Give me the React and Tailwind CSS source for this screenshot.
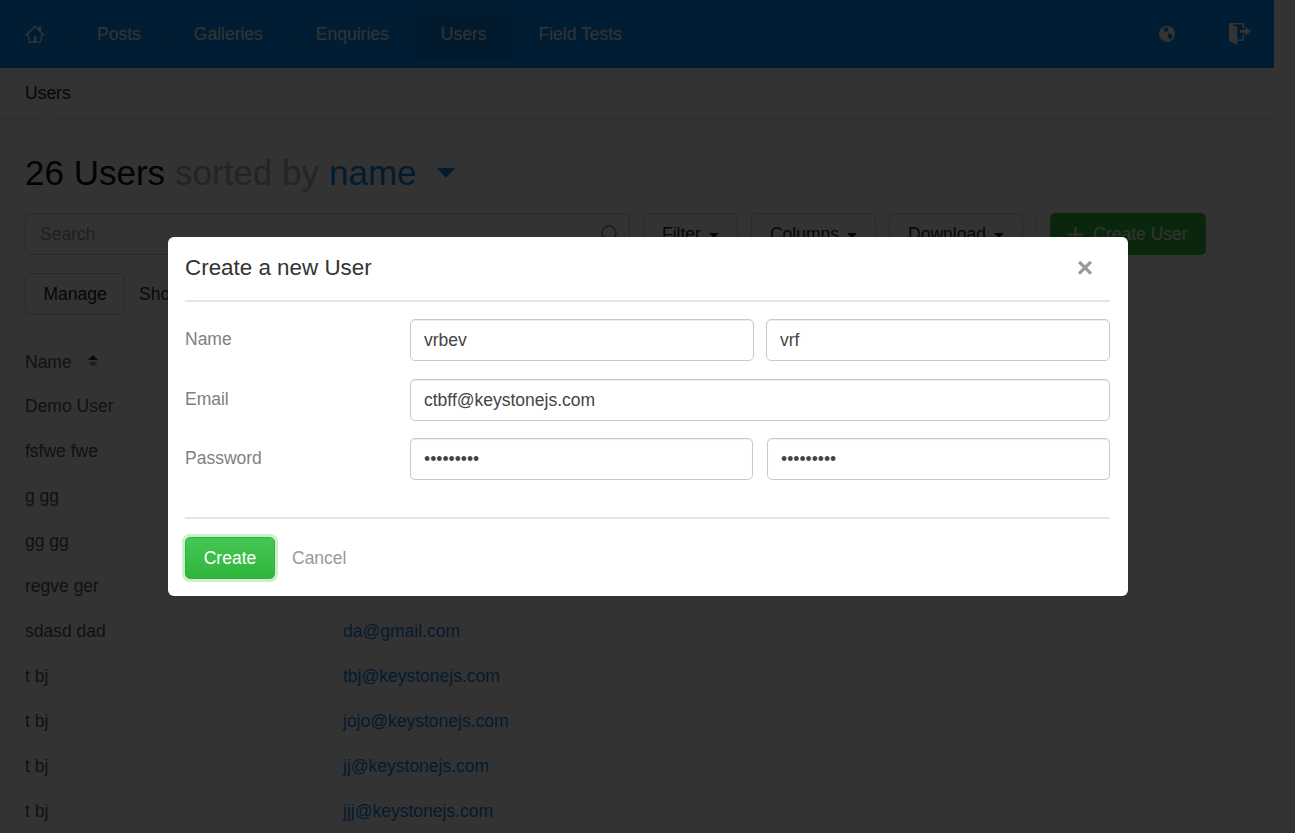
const navItems = ['Posts', 'Galleries', 'Enquiries', 'Users', 'Field Tests'];

const rows = [
  ['Demo User', 'demo@keystonejs.com'],
  ['fsfwe fwe', 'fwe@keystonejs.com'],
  ['g gg', 'gg@keystonejs.com'],
  ['gg gg', 'ggg@keystonejs.com'],
  ['regve ger', 'ger@keystonejs.com'],
  ['sdasd dad', 'da@gmail.com'],
  ['t bj', 'tbj@keystonejs.com'],
  ['t bj', 'jojo@keystonejs.com'],
  ['t bj', 'jj@keystonejs.com'],
  ['t bj', 'jjj@keystonejs.com'],
];

function NavSep() {
  return <span className="w-px h-5 bg-black/10" />;
}

function Caret() {
  return <span className="inline-block ml-2 w-0 h-0 border-x-[5px] border-t-[5px] border-x-transparent border-t-[#1a1a1a] align-middle" />;
}

function ToolButton({ label, className }) {
  return (
    <button className={`h-[42px] border border-[#ccc] rounded-[5px] text-[17.5px] text-[#222] bg-white ${className}`}>
      {label}
      <Caret />
    </button>
  );
}

function TextInput({ value, type = 'text', className = '' }) {
  return (
    <input
      readOnly
      type={type}
      value={value}
      className={`h-[42px] min-w-0 px-[13px] border border-[#c9c9c9] rounded-[5px] text-[17.5px] text-[#444] bg-white shadow-[inset_0_1px_1px_rgba(0,0,0,0.075)] outline-none ${className}`}
    />
  );
}

export default function App() {
  return (
    <div className="relative h-[833px] overflow-hidden bg-white font-['Liberation_Sans',sans-serif]">
      <div className="w-[1274px]">
        <nav className="h-[68px] flex items-center bg-[#0591ff] text-white text-[17.5px]">
          <div className="pl-[25px] pr-[25px]">
            <svg width="20" height="20" viewBox="0 0 16 16" fill="currentColor" className="block">
              <path d="M16 9l-3-3V2h-2v2L8 1 0 9h2l1 5c0 .55.45 1 1 1h8c.55 0 1-.45 1-1l1-5h2zm-4 5H9v-4H7v4H4L2.81 7.69 8 2.5l5.19 5.19L12 14z" />
            </svg>
          </div>
          <NavSep />
          {navItems.map((item, i) => (
            <div key={item} className="flex items-center">
              <a className={`h-[50px] leading-[50px] px-[26px] rounded-[5px] ${item === 'Users' ? 'bg-[#0580e0]' : ''}`}>{item}</a>
              {i < 2 && <NavSep />}
            </div>
          ))}
          <div className="ml-auto flex items-center">
            <svg width="16" height="18" viewBox="0 0 16 18" className="block mr-[28px]">
              <circle cx="8" cy="9" r="8" fill="white" />
              <path d="M5 3l3.5-1 1 3-2.5 2.5-2-2z M9 8l3.5 1.5 1.5 2-3 3.5-2-3z" fill="#0591ff" />
            </svg>
            <NavSep />
            <svg width="22" height="22" viewBox="0 0 16 16" fill="currentColor" className="block ml-[25px] mr-[23px]">
              <path d="M12 9V7H8V5h4V3l4 3-4 3zm-2 3H6V3L2 1h8v3h1V1c0-.55-.45-1-1-1H1C.45 0 0 .45 0 1v11.38c0 .39.22.73.55.91L6 16.01V13h4c.55 0 1-.45 1-1V8h-1v4z" />
            </svg>
          </div>
        </nav>

        <div className="relative h-[52px] border-b border-[#e6e6e6] pl-[25px] leading-[50px] text-[17.5px] text-[#222]">
          Users
          <span className="absolute left-[41px] top-[44px] w-[14px] h-[14px] rotate-45 bg-white border-r border-b border-[#e6e6e6]" />
        </div>

        <main className="pl-[25px] pr-[24px]">
          <h1 className="mt-[31px] h-[44px] flex items-center text-[35px] leading-[44px] text-[#111]">
            <span>26 Users</span>
            <span className="ml-[10px] text-[#b4b4b4]">sorted by</span>
            <span className="ml-[10px] text-[#1385e5]">name</span>
            <span className="ml-[20px] w-0 h-0 border-x-[9px] border-t-[10px] border-x-transparent border-t-[#1385e5]" />
          </h1>

          <div className="mt-[18px] flex items-center">
            <div className="relative w-[605px] h-[42px] border border-[#ccc] rounded-[5px] pl-[14px] leading-[40px] text-[17.5px] text-[#999]">
              Search
              <svg width="18" height="18" viewBox="0 0 18 18" fill="none" stroke="#888" strokeWidth="1.5" className="absolute right-[10px] top-[11px]">
                <circle cx="8" cy="8" r="7" />
              </svg>
            </div>
            <ToolButton label="Filter" className="ml-[13px] w-[95px]" />
            <ToolButton label="Columns" className="ml-[13px] w-[125px]" />
            <ToolButton label="Download" className="ml-[13px] w-[134px]" />
            <span className="ml-[13px] w-px h-[42px] bg-[#e6e6e6]" />
            <button className="ml-[13px] w-[156px] h-[42px] rounded-[5px] bg-[#34c240] text-white text-[17.5px] flex items-center justify-center gap-[10px]">
              <svg width="15" height="15" viewBox="0 0 15 15" fill="currentColor" className="block">
                <path d="M6.5 0h2v6.5H15v2H8.500V15h-2V8.500H0v-2h6.500z" />
              </svg>
              Create User
            </button>
          </div>

          <div className="mt-[18px] flex items-center">
            <button className="w-[100px] h-[42px] border border-[#ccc] rounded-[5px] text-[17.5px] text-[#222]">Manage</button>
            <span className="ml-[14px] text-[17.5px] text-[#333]">Show</span>
          </div>

          <div className="mt-[23px] text-[17.5px] text-[#555]">
            <div className="h-[46px] pt-[11px] flex items-start border-b border-[#eee]">
              <span className="leading-[26px]">Name</span>
              <span className="ml-[16px] mt-[6px] flex flex-col gap-[2px]">
                <span className="w-0 h-0 border-x-[5px] border-b-[5px] border-x-transparent border-b-[#333]" />
                <span className="w-0 h-0 border-x-[5px] border-t-[5px] border-x-transparent border-t-[#999]" />
              </span>
            </div>
            {rows.map(([name, email], i) => (
              <div key={i} className="h-[45px] grid grid-cols-[318px_1fr] items-center border-b border-[#eee]">
                <span>{name}</span>
                <a className="text-[#1385e5]">{email}</a>
              </div>
            ))}
          </div>
        </main>
      </div>

      <div className="fixed inset-0 bg-black/80 flex items-start pl-[168px] pt-[237px]">
        <div className="w-[960px] h-[359px] bg-white rounded-[6px] pl-[17px] pr-[18px]">
          <div className="h-[65px] flex items-center justify-between border-b-2 border-[#e5e5e5]">
            <h2 className="text-[22.4px] text-[#333] -mt-[1px]">Create a new User</h2>
            <span className="mr-[17px] -mt-[1px] text-[28px] leading-none font-bold text-[#999]">×</span>
          </div>

          <form className="pt-[17px] h-[217px] border-b-2 border-[#e5e5e5]">
            <div className="flex mb-[18px]">
              <label className="w-[225px] shrink-0 text-[17.5px] leading-[40px] text-[#7f7f7f]">Name</label>
              <div className="flex-1 flex gap-[12px]">
                <TextInput value="vrbev" className="flex-1" />
                <TextInput value="vrf" className="flex-1" />
              </div>
            </div>
            <div className="flex mb-[17px]">
              <label className="w-[225px] shrink-0 text-[17.5px] leading-[40px] text-[#7f7f7f]">Email</label>
              <TextInput value="ctbff@keystonejs.com" className="flex-1" />
            </div>
            <div className="flex">
              <label className="w-[225px] shrink-0 text-[17.5px] leading-[40px] text-[#7f7f7f]">Password</label>
              <div className="flex-1 flex gap-[14px]">
                <TextInput type="password" value="123456789" className="flex-1" />
                <TextInput type="password" value="123456789" className="flex-1" />
              </div>
            </div>
          </form>

          <div className="pt-[18px] flex items-center">
            <button className="w-[90px] h-[42px] rounded-[5px] border border-[#36ad42] bg-gradient-to-b from-[#45c853] to-[#2fb53c] text-white text-[17.5px] shadow-[0_0_0_3px_#c9f0cd]">Create</button>
            <span className="ml-[17px] text-[17.5px] text-[#999]">Cancel</span>
          </div>
        </div>
      </div>
    </div>
  );
}
